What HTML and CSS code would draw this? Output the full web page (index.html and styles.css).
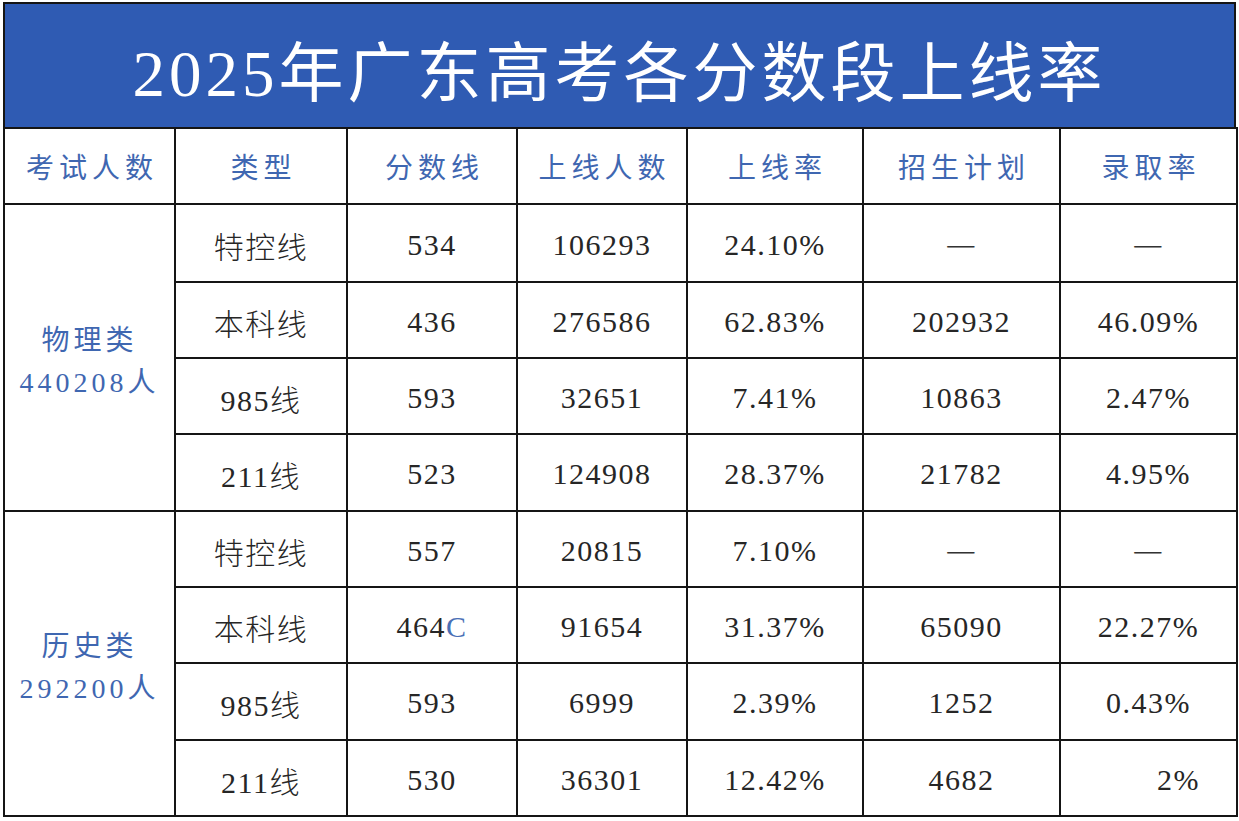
FILE: index.html
```html
<!DOCTYPE html>
<html lang="zh-CN">
<head>
<meta charset="utf-8">
<title>2025年广东高考各分数段上线率</title>
<link rel="stylesheet" href="styles.css">
</head>
<body>
<div class="sheet">
  <div class="title">2025年广东高考各分数段上线率</div>
  <table class="grid">
    <colgroup>
      <col class="c1"><col class="c2"><col class="c3"><col class="c4"><col class="c5"><col class="c6"><col class="c7">
    </colgroup>
    <thead>
      <tr class="head">
        <th>考试人数</th><th>类型</th><th>分数线</th><th>上线人数</th><th>上线率</th><th>招生计划</th><th>录取率</th>
      </tr>
    </thead>
    <tbody>
      <tr class="r1">
        <td rowspan="4" class="group">物理类<br>440208人</td>
        <td>特控线</td><td>534</td><td>106293</td><td>24.10%</td><td class="dash">一</td><td class="dash">一</td>
      </tr>
      <tr class="r2"><td>本科线</td><td>436</td><td>276586</td><td>62.83%</td><td>202932</td><td>46.09%</td></tr>
      <tr class="r3"><td>985线</td><td>593</td><td>32651</td><td>7.41%</td><td>10863</td><td>2.47%</td></tr>
      <tr class="r4"><td>211线</td><td>523</td><td>124908</td><td>28.37%</td><td>21782</td><td>4.95%</td></tr>
      <tr class="r5">
        <td rowspan="4" class="group">历史类<br>292200人</td>
        <td>特控线</td><td>557</td><td>20815</td><td>7.10%</td><td class="dash">一</td><td class="dash">一</td>
      </tr>
      <tr class="r6"><td>本科线</td><td>464<span class="blue">C</span></td><td>91654</td><td>31.37%</td><td>65090</td><td>22.27%</td></tr>
      <tr class="r7"><td>985线</td><td>593</td><td>6999</td><td>2.39%</td><td>1252</td><td>0.43%</td></tr>
      <tr class="r8"><td>211线</td><td>530</td><td>36301</td><td>12.42%</td><td>4682</td><td class="right">2%</td></tr>
    </tbody>
  </table>
</div>
</body>
</html>
```

FILE: styles.css
```css
* { box-sizing: border-box; }
html, body { margin: 0; padding: 0; background: #ffffff; }
body { font-family: "Liberation Serif", "Noto Sans CJK SC", serif; color: #222; }

.sheet {
  margin: 2px 0 0 3px;
  width: 1233px;
}

.title {
  height: 125px;
  background: #2f5bb3;
  border: 2px solid #151515;
  border-bottom: none;
  color: #ffffff;
  font-size: 65px;
  letter-spacing: 4px;
  display: flex;
  align-items: center;
  justify-content: center;
  padding-left: 0;
  padding-top: 4px;
}

.grid {
  width: 1233px;
  border-collapse: collapse;
  table-layout: fixed;
}
.c1 { width: 171px; }
.c2 { width: 172px; }
.c3 { width: 170px; }
.c4 { width: 170px; }
.c5 { width: 176px; }
.c6 { width: 197px; }
.c7 { width: 177px; }

.grid th, .grid td {
  border: 2px solid #151515;
  text-align: center;
  vertical-align: middle;
  padding: 0;
  font-weight: 300;
}
.grid th {
  color: #3f67b1;
  font-size: 28px;
  font-weight: 400;
  letter-spacing: 5px;
  padding-left: 5px;
}
.grid td {
  font-size: 30px;
  letter-spacing: 1.5px;
  color: #262626;
  padding-top: 3px;
}
.grid td.group {
  color: #3f67b1;
  font-size: 28px;
  font-weight: 400;
  letter-spacing: 4px;
  line-height: 42px;
  padding-top: 8px;
}
.grid td.dash { font-weight: 200; color: #333; }
.grid td.right { text-align: right; padding-right: 36px; }
.blue { color: #4a70b6; }

.head { height: 76px; }
.r1 { height: 78px; }
.r2 { height: 76px; }
.r3 { height: 76px; }
.r4 { height: 77px; }
.r5 { height: 76px; }
.r6 { height: 76px; }
.r7 { height: 77px; }
.r8 { height: 76px; }
```
